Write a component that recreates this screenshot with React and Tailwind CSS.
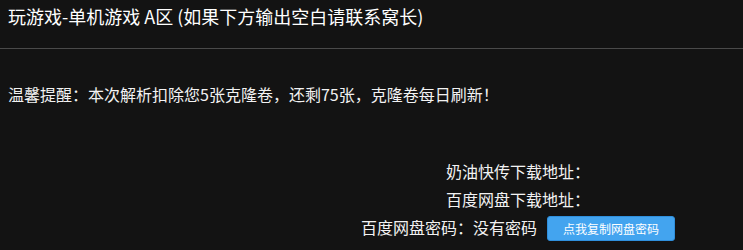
import React from "react";

const font = { fontFamily: '"Noto Sans CJK SC", "Noto Sans", sans-serif' };

export default function App() {
  return (
    <div className="w-[743px] h-[250px] bg-[#131313] text-[#f2f2f2] overflow-hidden" style={font}>
      {/* header */}
      <div className="px-2 pt-[4px] pb-[20px] border-b border-[#4a4a4a]">
        <h1 className="text-[18px] leading-[24px] font-normal text-white">
          玩游戏-单机游戏 A区 (如果下方输出空白请联系窝长)
        </h1>
      </div>

      {/* notice */}
      <p className="mt-[33px] px-2 text-[16px] leading-[24px]">
        温馨提醒：本次解析扣除您5张克隆卷，还剩75张，克隆卷每日刷新！
      </p>

      {/* download links */}
      <div className="mt-[51px] grid grid-cols-[293px_1fr]">
        <div />
        <div className="text-center text-[16px]">
          <div className="leading-[28px]">奶油快传下载地址：</div>
          <div className="leading-[28px]">百度网盘下载地址：</div>
          <div className="flex justify-center items-baseline leading-[28px]">
            <span>百度网盘密码：没有密码</span>
            <button className="ml-[10px] h-[25px] w-[128px] rounded-[3px] border border-[#2f8fdc] bg-[#43a4ef] text-[12px] leading-[23px] text-white">
              点我复制网盘密码
            </button>
          </div>
        </div>
      </div>
    </div>
  );
}
